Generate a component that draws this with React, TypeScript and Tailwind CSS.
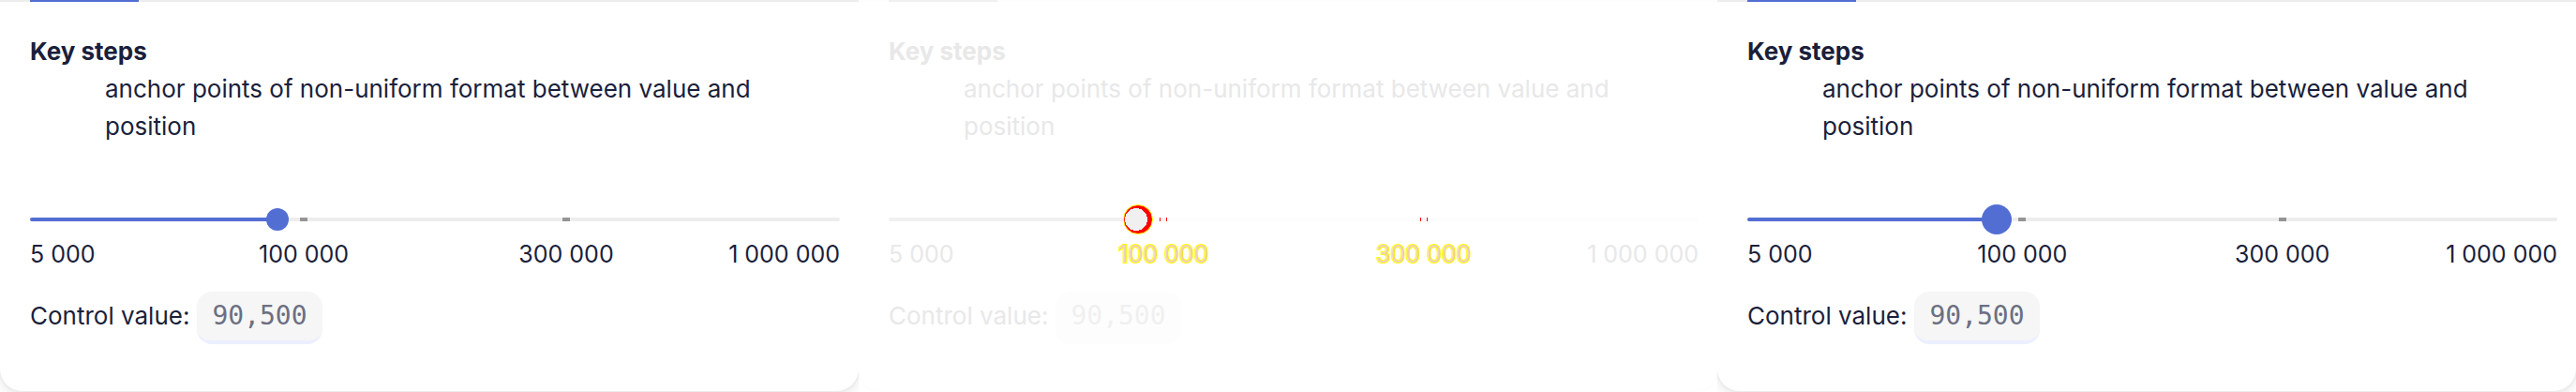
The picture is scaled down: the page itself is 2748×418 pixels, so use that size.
import { useId, useState } from "react";

type Variant = "small" | "diff" | "large";

const STEPS = [5000, 100000, 300000, 1000000];

const styles = {
  small: {
    card: "text-[#1b1f3b] shadow-[0_0_0_2px_#ededed,0_4px_12px_2px_#00000014]",
    line: "bg-[#ededed]",
    tab: "bg-[#526ed3]",
    inset: "px-3",
    fill: "bg-[#526ed3]",
    rail: "bg-[#ededed]",
    tick: "bg-[#959595]",
    thumb:
      "[&::-webkit-slider-thumb]:size-6 [&::-webkit-slider-thumb]:bg-[#526ed3]",
    first: "-ml-3",
    last: "-mr-3",
    label: "",
    chip: "bg-[#f6f6f6] border-[#ebefff] text-[#6c6f82]",
  },
  diff: {
    card: "text-[#e8e8e8] shadow-[0_0_0_2px_#fdfdfd]",
    line: "bg-[#fdfdfd]",
    tab: "bg-[#f0f0f0]",
    inset: "px-4",
    fill: "bg-[#f0f0f0]",
    rail: "bg-[#fdfdfd]",
    tick: "bg-[#f4f4f4] border-x border-[#ff0000]",
    thumb:
      "[&::-webkit-slider-thumb]:size-8 [&::-webkit-slider-thumb]:border [&::-webkit-slider-thumb]:border-[#ffff00] [&::-webkit-slider-thumb]:bg-[radial-gradient(circle_at_13px_15px,#f0f0f0_12px,#ff0000_12px)]",
    first: "-ml-4",
    last: "-mr-4",
    label:
      "text-[#f0d0c0] [paint-order:stroke_fill] [-webkit-text-stroke:2px_#ffff00]",
    chip: "bg-[#fdfdfd] border-[#fdfdfd] text-[#f0f0f0]",
  },
  large: {
    card: "text-[#1b1f3b] shadow-[0_0_0_2px_#ededed,0_4px_12px_2px_#00000014]",
    line: "bg-[#ededed]",
    tab: "bg-[#526ed3]",
    inset: "px-4",
    fill: "bg-[#526ed3]",
    rail: "bg-[#ededed]",
    tick: "bg-[#959595]",
    thumb:
      "[&::-webkit-slider-thumb]:size-8 [&::-webkit-slider-thumb]:bg-[#526ed3]",
    first: "-ml-4",
    last: "-mr-4",
    label: "",
    chip: "bg-[#f6f6f6] border-[#ebefff] text-[#6c6f82]",
  },
};

function toValue(position: number) {
  const scaled = (position / 1000) * 3;
  const index = Math.min(2, Math.floor(scaled));
  const from = STEPS[index];
  const to = STEPS[index + 1];
  return Math.round(from + (to - from) * (scaled - index));
}

function spaced(value: number) {
  return value.toLocaleString("en-US").replace(/,/g, " ");
}

function Panel({ variant }: { variant: Variant }) {
  const s = styles[variant];
  const id = useId();
  const [position, setPosition] = useState(300);

  return (
    <section className="min-w-0 overflow-hidden pb-0.5">
      <div className={`rounded-b-3xl bg-white pb-[50px] ${s.card}`}>
        <div className={`h-0.5 pl-8 ${s.line}`}>
          <div className={`h-0.5 w-[116px] ${s.tab}`} />
        </div>
        <div className="pr-5 pl-8 pt-[33px]">
          <dl className="leading-10">
            <dt className="font-bold">Key steps</dt>
            <dd className="pl-20">
              anchor points of non-uniform format between value and position
            </dd>
          </dl>

          <div className="relative mt-[63px] grid h-8 items-center">
            <div
              className={`col-start-1 row-start-1 h-1 overflow-hidden rounded-full ${s.rail} ${s.inset}`}
            >
              <div className="relative h-1">
                <div
                  className={`absolute inset-y-0 -left-4 ${s.fill}`}
                  style={{ width: `calc(${position / 10}% + 16px)` }}
                />
                <div
                  className={`absolute inset-y-0 left-1/3 -ml-1 w-2 ${s.tick}`}
                />
                <div
                  className={`absolute inset-y-0 left-2/3 -ml-1 w-2 ${s.tick}`}
                />
              </div>
            </div>
            <input
              id={id}
              type="range"
              min={0}
              max={1000}
              value={position}
              onChange={(e) => setPosition(Number(e.target.value))}
              className={`relative col-start-1 row-start-1 m-0 h-8 w-full cursor-pointer appearance-none bg-transparent outline-none [&::-webkit-slider-thumb]:appearance-none [&::-webkit-slider-thumb]:rounded-full ${s.thumb}`}
            />
          </div>

          <div
            className={`grid grid-cols-[minmax(0,1fr)_minmax(0,2fr)_minmax(0,2fr)_minmax(0,1fr)] pt-px text-[25px] leading-10 whitespace-nowrap ${s.inset}`}
          >
            <span className={s.first}>{spaced(STEPS[0])}</span>
            <span className={`text-center ${s.label}`}>{spaced(STEPS[1])}</span>
            <span className={`text-center ${s.label}`}>{spaced(STEPS[2])}</span>
            <span className={`flex justify-end ${s.last}`}>
              {spaced(STEPS[3])}
            </span>
          </div>

          <div className="mt-5 flex items-baseline gap-2">
            <label htmlFor={id}>Control value:</label>
            <output
              htmlFor={id}
              className={`rounded-2xl border-b-4 px-4 py-1.5 font-['DejaVu_Sans_Mono',monospace] text-[28px] leading-10 ${s.chip}`}
            >
              {toValue(position).toLocaleString("en-US")}
            </output>
          </div>
        </div>
      </div>
    </section>
  );
}

export default function App() {
  return (
    <main className="grid grid-cols-3 bg-white font-['Inter',sans-serif] text-[26px]">
      <Panel variant="small" />
      <Panel variant="diff" />
      <Panel variant="large" />
    </main>
  );
}
